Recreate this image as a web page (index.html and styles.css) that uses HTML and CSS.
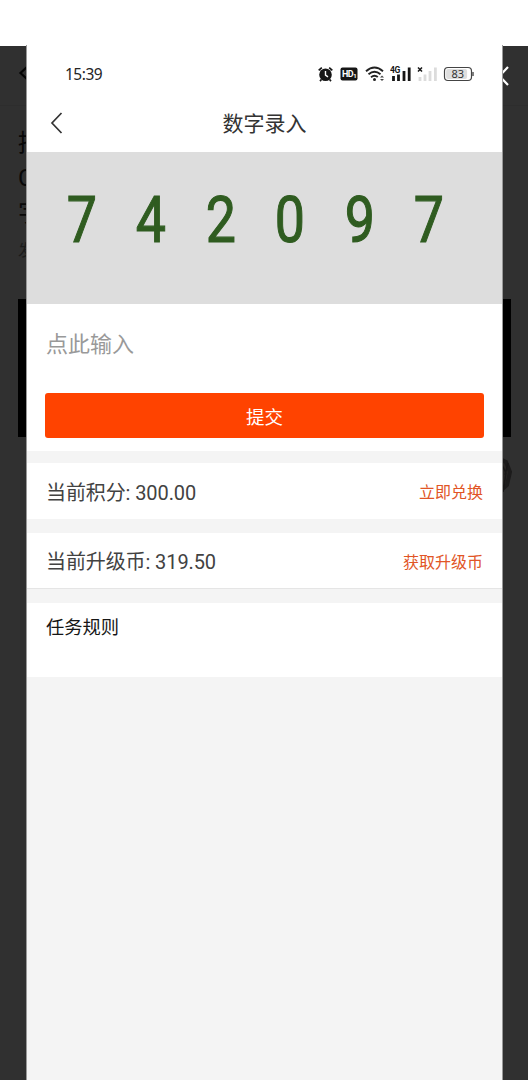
FILE: index.html
```html
<!DOCTYPE html>
<html lang="zh-CN">
<head>
<meta charset="utf-8">
<title>数字录入</title>
<link rel="stylesheet" href="styles.css">
</head>
<body>
<div class="stage">
  <div class="backdrop">
    <header class="backdrop-bar">
      <svg class="backdrop-back" width="18" height="18" viewBox="0 0 18 18"><path d="M12 2L4.5 9l7.5 7"/></svg>
      <svg class="backdrop-close" width="16" height="20" viewBox="0 0 16 20"><path d="M13 1L4.5 10l8.5 9"/></svg>
    </header>
    <div class="article">
      <h2 class="article-title">招<br>C<br>字</h2>
      <p class="article-meta">发</p>
    </div>
    <div class="article-media"></div>
    <div class="article-strip">
      <svg width="40" height="60" viewBox="0 0 40 60"><path class="ring" d="M22 13l12 6 4 10-3 13-10 9"/><path class="ring-line" d="M28 18l6 12-3 19M36 20l-3 12"/></svg>
    </div>
  </div>

  <main class="phone">
    <div class="status">
      <span class="clock">15:39</span>
      <div class="status-icons">
        <svg width="16" height="16" viewBox="0 0 16 16"><circle cx="7.5" cy="8.8" r="6.3" fill="#161616"/><path d="M.7 4.4L3.8 1.6M11.2 1.6l3.1 2.8M3.3 13.7l-1.3 1.4M11.7 13.7l1.3 1.4" stroke="#161616" stroke-width="1.7"/><path d="M7.5 5v4.2l2.5 1.6" fill="none" stroke="#fff" stroke-width="1.4"/></svg>
        <svg class="hd-badge" width="18" height="14" viewBox="0 0 18 14"><rect x=".5" y=".5" width="17" height="13" rx="2" fill="#161616"/><text x="2" y="10.4" class="hd">HD</text><text x="13.3" y="10.6" class="hd-sub">1</text></svg>
        <svg width="20" height="16" viewBox="0 0 20 16"><path d="M1 5.2q8.5-7.2 17 0M3.5 8.2q6-5 12 0M6 11.2q3.5-2.8 6.8-.1" fill="none" stroke="#222" stroke-width="1.9"/><circle cx="9.5" cy="13.6" r="1.5" fill="#222"/><path d="M15 11.4l2-2 2 2zM15 13l2 2 2-2z" fill="#444"/></svg>
        <svg width="22" height="16" viewBox="0 0 22 16"><text x="0" y="7" class="net">4G</text><path d="M3.5 10v5M8.5 8.5V15M14 5v10M19.2 1.5V15" stroke="#161616" stroke-width="2.8"/></svg>
        <svg width="21" height="16" viewBox="0 0 21 16"><path d="M1 1.5l4 4M5 1.5l-4 4" stroke="#161616" stroke-width="1.5"/><path d="M3 11v4M8 8.5V15M13 5v10M18.4 1.5V15" stroke="#dcdcdc" stroke-width="2.8"/></svg>
        <svg width="31" height="16" viewBox="0 0 31 16"><rect x="1.5" y="1.5" width="27" height="13" rx="3.5" fill="#fff" stroke="#444" stroke-width="1.2"/><rect x="3.1" y="3" width="21" height="10" rx="2" fill="#dedede"/><path d="M30 6v4" stroke="#555" stroke-width="1.5"/><text x="14.7" y="12" text-anchor="middle" class="charge">83</text></svg>
      </div>
    </div>

    <header class="nav">
      <svg class="nav-back" width="14" height="22" viewBox="0 0 14 22"><path d="M11.5 1L2 11l9.5 10"/></svg>
      <h1 class="nav-title">数字录入</h1>
    </header>

    <section class="captcha">
      <span class="digit">7</span><span class="digit">4</span><span class="digit">2</span><span class="digit">0</span><span class="digit">9</span><span class="digit">7</span>
    </section>

    <section class="entry">
      <div class="field">点此输入</div>
      <button class="submit" type="button">提交</button>
    </section>

    <section class="row">
      <span>当前积分: 300.00</span>
      <a class="action">立即兑换</a>
    </section>
    <section class="row">
      <span>当前升级币: 319.50</span>
      <a class="action">获取升级币</a>
    </section>
    <section class="rules">任务规则</section>
  </main>
</div>
</body>
</html>
```
FILE: styles.css
```css
* { box-sizing: border-box; }
body {
  margin: 0;
  background: #fff;
  font-family: Roboto, "Noto Sans CJK SC", sans-serif;
}
.stage {
  position: relative;
  width: 528px;
  height: 1080px;
  overflow: hidden;
  padding-top: 46px;
}

/* Dimmed page behind the phone screen */
.backdrop {
  height: 1034px;
  background: #303030;
  color: #080808;
}
.backdrop-bar {
  display: flex;
  justify-content: space-between;
  align-items: center;
  height: 60px;
  padding: 0 17px 0 16px;
  border-bottom: 1px solid #2d2d2d;
}
.backdrop-back { margin-top: -6px; }
.backdrop-bar path { fill: none; stroke-width: 2.2; }
.backdrop-back path { stroke: #050505; }
.backdrop-close path { stroke: #fff; }
.article { height: 193px; padding: 20px 18px; }
.article-title {
  margin: 0;
  font-size: 24px;
  line-height: 35px;
  font-weight: 400;
}
.article-meta {
  margin: 8px 0 0;
  font-size: 16px;
  line-height: 24px;
  color: #1b1b1b;
}
.article-media {
  height: 138px;
  margin: 0 17px 0 18px;
  background: #000;
}
.article-strip {
  display: flex;
  justify-content: flex-end;
  height: 643px;
  padding: 6px 16px 0 0;
}
.ring { fill: #292725; stroke: #1c1b1b; stroke-width: 4; }
.ring-line { fill: none; stroke: #181717; stroke-width: 1.5; }

/* Phone screen laid over the dimmed page */
.phone {
  position: absolute;
  top: 0;
  left: 26px;
  width: 477px;
  height: 1080px;
  background: #f4f4f4;
  border: solid;
  border-width: 0 1px;
  border-image: linear-gradient(#fff 46px, #999 46px) 1;
}
.status {
  display: flex;
  justify-content: space-between;
  align-items: center;
  height: 94px;
  padding: 54px 28px 0 38px;
  background: #fff;
}
.clock {
  font-family: "Noto Sans", sans-serif;
  font-size: 15.5px;
  letter-spacing: -.5px;
  color: #252525;
}
.status-icons { display: flex; align-items: center; gap: 5px; }
.hd-badge { margin: 0 2px 0 1px; }
.hd { font: 700 9px Roboto, sans-serif; fill: #fff; letter-spacing: -.5px; }
.hd-sub { font: 700 6px Roboto, sans-serif; fill: #fff; }
.net { font: 700 8.5px Roboto, sans-serif; fill: #161616; letter-spacing: -.5px; }
.charge { font: 11px "Noto Sans", sans-serif; fill: #333; }

.nav {
  display: grid;
  grid-template-columns: 1fr auto 1fr;
  align-items: center;
  height: 58px;
  padding: 0 23px;
  background: #fff;
}
.nav-back path { fill: none; stroke: #333; stroke-width: 1.7; }
.nav-title {
  margin: 0;
  padding-top: 2px;
  font-size: 21px;
  line-height: 30px;
  font-weight: 400;
  color: #333;
}

.captcha {
  display: grid;
  grid-template-columns: repeat(6, 69.6px);
  height: 152px;
  padding: 29px 0 0 19.5px;
  background: #ddd;
}
.digit {
  text-align: center;
  font: 64px/80px Roboto, sans-serif;
  color: #2f5c20;
  -webkit-text-stroke: 1.1px #2f5c20;
  transform: scaleX(.84);
}

.entry {
  height: 147px;
  padding: 22px 18px 0;
  background: #fff;
}
.field {
  height: 67px;
  padding-left: 1px;
  font-size: 22px;
  line-height: 38px;
  color: #999;
}
.submit {
  display: block;
  width: 439px;
  height: 45px;
  padding: 6px 0 0;
  border: 0;
  border-radius: 3px;
  background: #ff4300;
  color: #fff;
  font: 18.5px/39px Roboto, "Noto Sans CJK SC", sans-serif;
}

.row {
  display: flex;
  justify-content: space-between;
  align-items: center;
  height: 56px;
  margin-top: 12px;
  padding: 0 19px;
  background: #fff;
  font-size: 20px;
  letter-spacing: -.1px;
  color: #424242;
}
.row + .row { margin-top: 14px; border-bottom: 1px solid #e5e5e5; }
.action { font-size: 16px; letter-spacing: 0; color: #e15526; }
.rules {
  height: 74px;
  margin-top: 14px;
  padding: 10px 19px;
  background: #fff;
  font-size: 18.3px;
  line-height: 30px;
  color: #161616;
}
```
